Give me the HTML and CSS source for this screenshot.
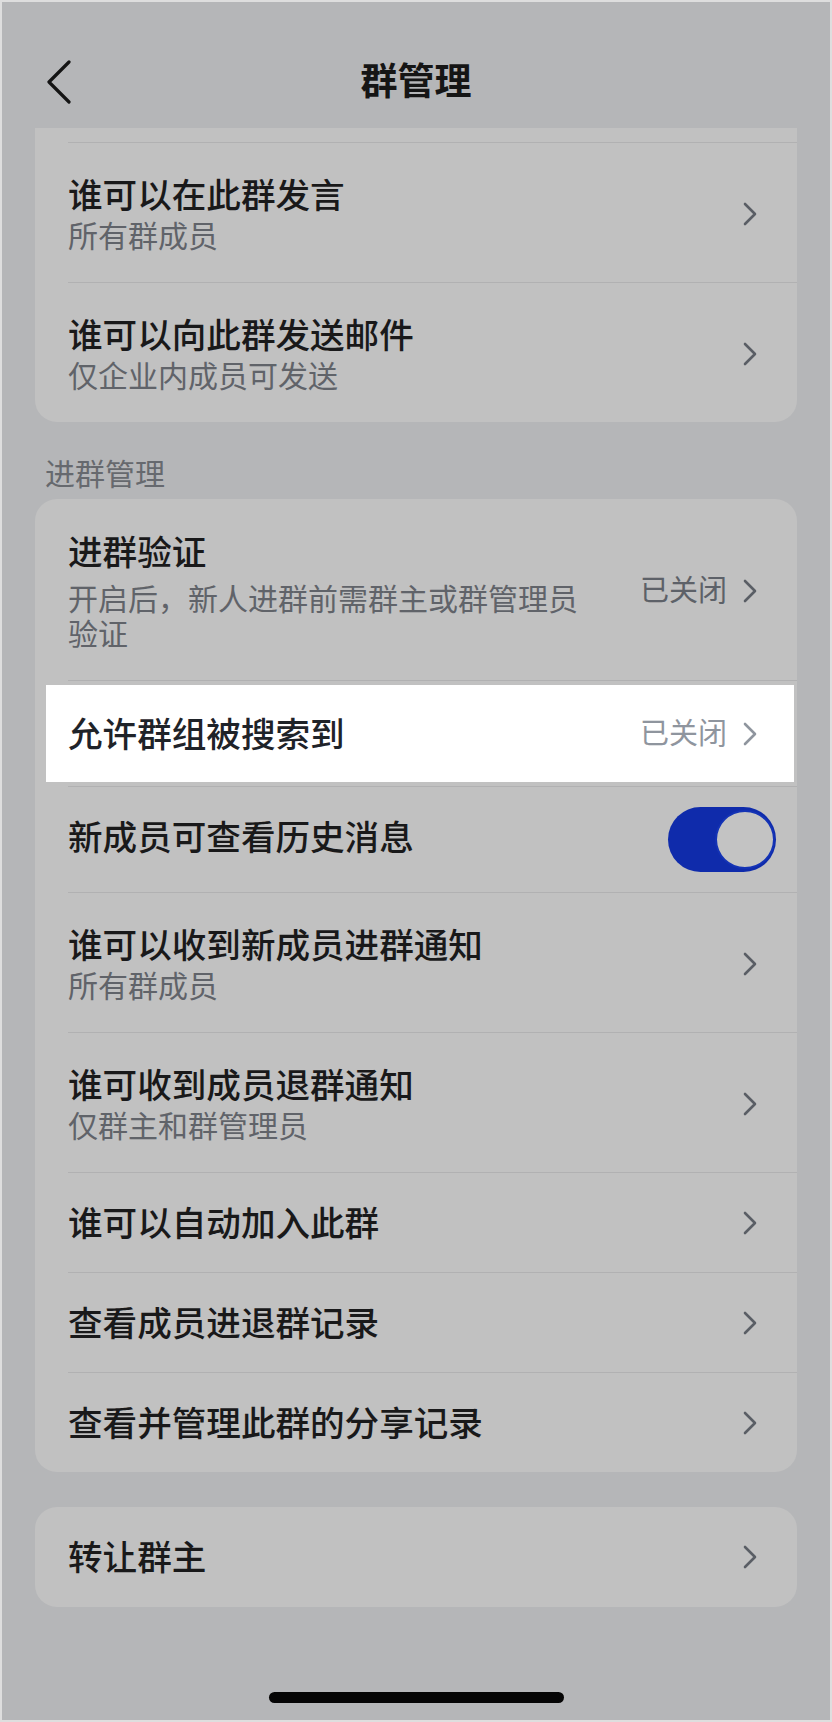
FILE: index.html
```html
<!DOCTYPE html>
<html lang="zh-CN">
<head>
    <meta charset="UTF-8">
    <meta name="viewport" content="width=device-width, initial-scale=1.0">
    <title>群管理</title>
    <link rel="stylesheet" href="styles.css">
</head>
<body>
    <div class="screen">
        <header class="nav">
            <svg class="back" width="26" height="44" viewBox="0 0 26 44">
                <polyline points="23,2 3,22 23,42" fill="none" stroke="#141414" stroke-width="3.2" stroke-linecap="round" stroke-linejoin="round"/>
            </svg>
            <h1>群管理</h1>
        </header>

        <main class="content">
            <div class="card card-cut">
                <div class="row">
                    <div class="row-body two-line">
                        <div class="row-text">
                            <div class="title">谁可以在此群发言</div>
                            <div class="sub">所有群成员</div>
                        </div>
                        <svg class="chev" width="14" height="24" viewBox="0 0 14 24"><polyline points="2,2 12,12 2,22"/></svg>
                    </div>
                </div>
                <div class="row">
                    <div class="row-body two-line">
                        <div class="row-text">
                            <div class="title">谁可以向此群发送邮件</div>
                            <div class="sub">仅企业内成员可发送</div>
                        </div>
                        <svg class="chev" width="14" height="24" viewBox="0 0 14 24"><polyline points="2,2 12,12 2,22"/></svg>
                    </div>
                </div>
            </div>

            <div class="section-label">进群管理</div>

            <div class="card">
                <div class="row">
                    <div class="row-body first verify">
                        <div class="row-text">
                            <div class="title">进群验证</div>
                            <div class="sub">开启后，新人进群前需群主或群管理员验证</div>
                        </div>
                        <span class="value">已关闭</span>
                        <svg class="chev" width="14" height="24" viewBox="0 0 14 24"><polyline points="2,2 12,12 2,22"/></svg>
                    </div>
                </div>
                <div class="row-focus">
                    <div class="focus-sep"></div>
                    <div class="focus-box">
                        <div class="row-text">
                            <div class="title">允许群组被搜索到</div>
                        </div>
                        <span class="value">已关闭</span>
                        <svg class="chev" width="14" height="24" viewBox="0 0 14 24"><polyline points="2,2 12,12 2,22"/></svg>
                    </div>
                </div>
                <div class="row">
                    <div class="row-body switch-row">
                        <div class="row-text">
                            <div class="title">新成员可查看历史消息</div>
                        </div>
                        <div class="switch on"><span class="knob"></span></div>
                    </div>
                </div>
                <div class="row">
                    <div class="row-body two-line">
                        <div class="row-text">
                            <div class="title">谁可以收到新成员进群通知</div>
                            <div class="sub">所有群成员</div>
                        </div>
                        <svg class="chev" width="14" height="24" viewBox="0 0 14 24"><polyline points="2,2 12,12 2,22"/></svg>
                    </div>
                </div>
                <div class="row">
                    <div class="row-body two-line">
                        <div class="row-text">
                            <div class="title">谁可收到成员退群通知</div>
                            <div class="sub">仅群主和群管理员</div>
                        </div>
                        <svg class="chev" width="14" height="24" viewBox="0 0 14 24"><polyline points="2,2 12,12 2,22"/></svg>
                    </div>
                </div>
                <div class="row">
                    <div class="row-body">
                        <div class="row-text">
                            <div class="title">谁可以自动加入此群</div>
                        </div>
                        <svg class="chev" width="14" height="24" viewBox="0 0 14 24"><polyline points="2,2 12,12 2,22"/></svg>
                    </div>
                </div>
                <div class="row">
                    <div class="row-body">
                        <div class="row-text">
                            <div class="title">查看成员进退群记录</div>
                        </div>
                        <svg class="chev" width="14" height="24" viewBox="0 0 14 24"><polyline points="2,2 12,12 2,22"/></svg>
                    </div>
                </div>
                <div class="row">
                    <div class="row-body">
                        <div class="row-text">
                            <div class="title">查看并管理此群的分享记录</div>
                        </div>
                        <svg class="chev" width="14" height="24" viewBox="0 0 14 24"><polyline points="2,2 12,12 2,22"/></svg>
                    </div>
                </div>
            </div>

            <div class="card card-single">
                <div class="row">
                    <div class="row-body first">
                        <div class="row-text">
                            <div class="title">转让群主</div>
                        </div>
                        <svg class="chev" width="14" height="24" viewBox="0 0 14 24"><polyline points="2,2 12,12 2,22"/></svg>
                    </div>
                </div>
            </div>
        </main>

        <div class="home-bar"><span></span></div>
    </div>
</body>
</html>
```

FILE: styles.css
```css
* {
    box-sizing: border-box;
}

body {
    margin: 0;
    padding: 0;
    font-family: 'Inter', 'Noto Sans CJK SC', sans-serif;
    color: #1a1a1b;
}

.screen {
    width: 832px;
    height: 1722px;
    border: 2px solid #dedede;
    background-color: #b5b6b8;
    display: flex;
    flex-direction: column;
}

/* navigation bar */
.nav {
    height: 126px;
    padding-top: 34px;
    display: flex;
    align-items: center;
    justify-content: center;
    position: relative;
}

.nav h1 {
    margin: 0;
    font-size: 37px;
    font-weight: 600;
    line-height: 48px;
    color: #151515;
}

.back {
    position: absolute;
    left: 44px;
    top: 58px;
}

.content {
    padding: 0 33px;
}

/* cards and rows */
.card {
    background-color: #c1c1c1;
    border-radius: 22px;
    overflow: hidden;
}

.card-cut {
    border-radius: 0 0 22px 22px;
    padding-top: 14px;
}

.card-single {
    margin-top: 35px;
}

.row {
    padding-left: 33px;
}

.row-body {
    min-height: 100px;
    border-top: 1px solid #b1b1b2;
    padding-right: 40px;
    display: flex;
    align-items: center;
}

.row-body.first {
    border-top: none;
}

.row-body.two-line {
    min-height: 140px;
    padding-top: 30px;
    padding-bottom: 27px;
}

.row-body.verify {
    min-height: 181px;
    padding-top: 31px;
    padding-bottom: 28px;
}

.row-body.verify .sub {
    margin-top: 8px;
    line-height: 35px;
}

.row-body.switch-row {
    min-height: 106px;
    padding-right: 21px;
}

.switch-row .row-text {
    margin-bottom: 6px;
}

.row-text {
    flex: 1;
    min-width: 0;
    padding-right: 40px;
}

.title {
    font-size: 34.6px;
    font-weight: 500;
    line-height: 44px;
    color: #19191a;
}

.sub {
    font-size: 30px;
    line-height: 38px;
    color: #606369;
}

.value {
    font-size: 29px;
    line-height: 38px;
    color: #5d6168;
    margin-right: 16px;
}

.chev {
    flex-shrink: 0;
}

.chev polyline {
    fill: none;
    stroke: #5a5e65;
    stroke-width: 2.6;
    stroke-linecap: round;
    stroke-linejoin: round;
}

/* highlighted row */
.focus-sep {
    margin-left: 33px;
    border-top: 1px solid #b1b1b2;
}

.focus-box {
    margin: 4px 3px 4px 11px;
    height: 97px;
    background-color: #ffffff;
    padding-left: 22px;
    padding-right: 37px;
    display: flex;
    align-items: center;
}

.focus-box .title {
    color: #1f2329;
}

.focus-box .value {
    color: #8f959e;
}

.focus-box .chev polyline {
    stroke: #8f959e;
}

/* toggle */
.switch {
    width: 108px;
    height: 65px;
    border-radius: 33px;
    background-color: #0f2bab;
    padding: 3px 1px 3px 3px;
    display: flex;
    justify-content: flex-end;
    align-items: center;
}

.knob {
    width: 60px;
    height: 59px;
    border-radius: 50%;
    background-color: #c3c3c3;
    border: 2px solid #1433b5;
}

.section-label {
    padding: 33px 0 6px 10px;
    font-size: 30px;
    line-height: 38px;
    color: #66696e;
}

/* home indicator */
.home-bar {
    margin-top: auto;
    height: 28px;
    display: flex;
    justify-content: center;
}

.home-bar span {
    width: 295px;
    height: 11px;
    border-radius: 6px;
    background-color: #050505;
}
```
